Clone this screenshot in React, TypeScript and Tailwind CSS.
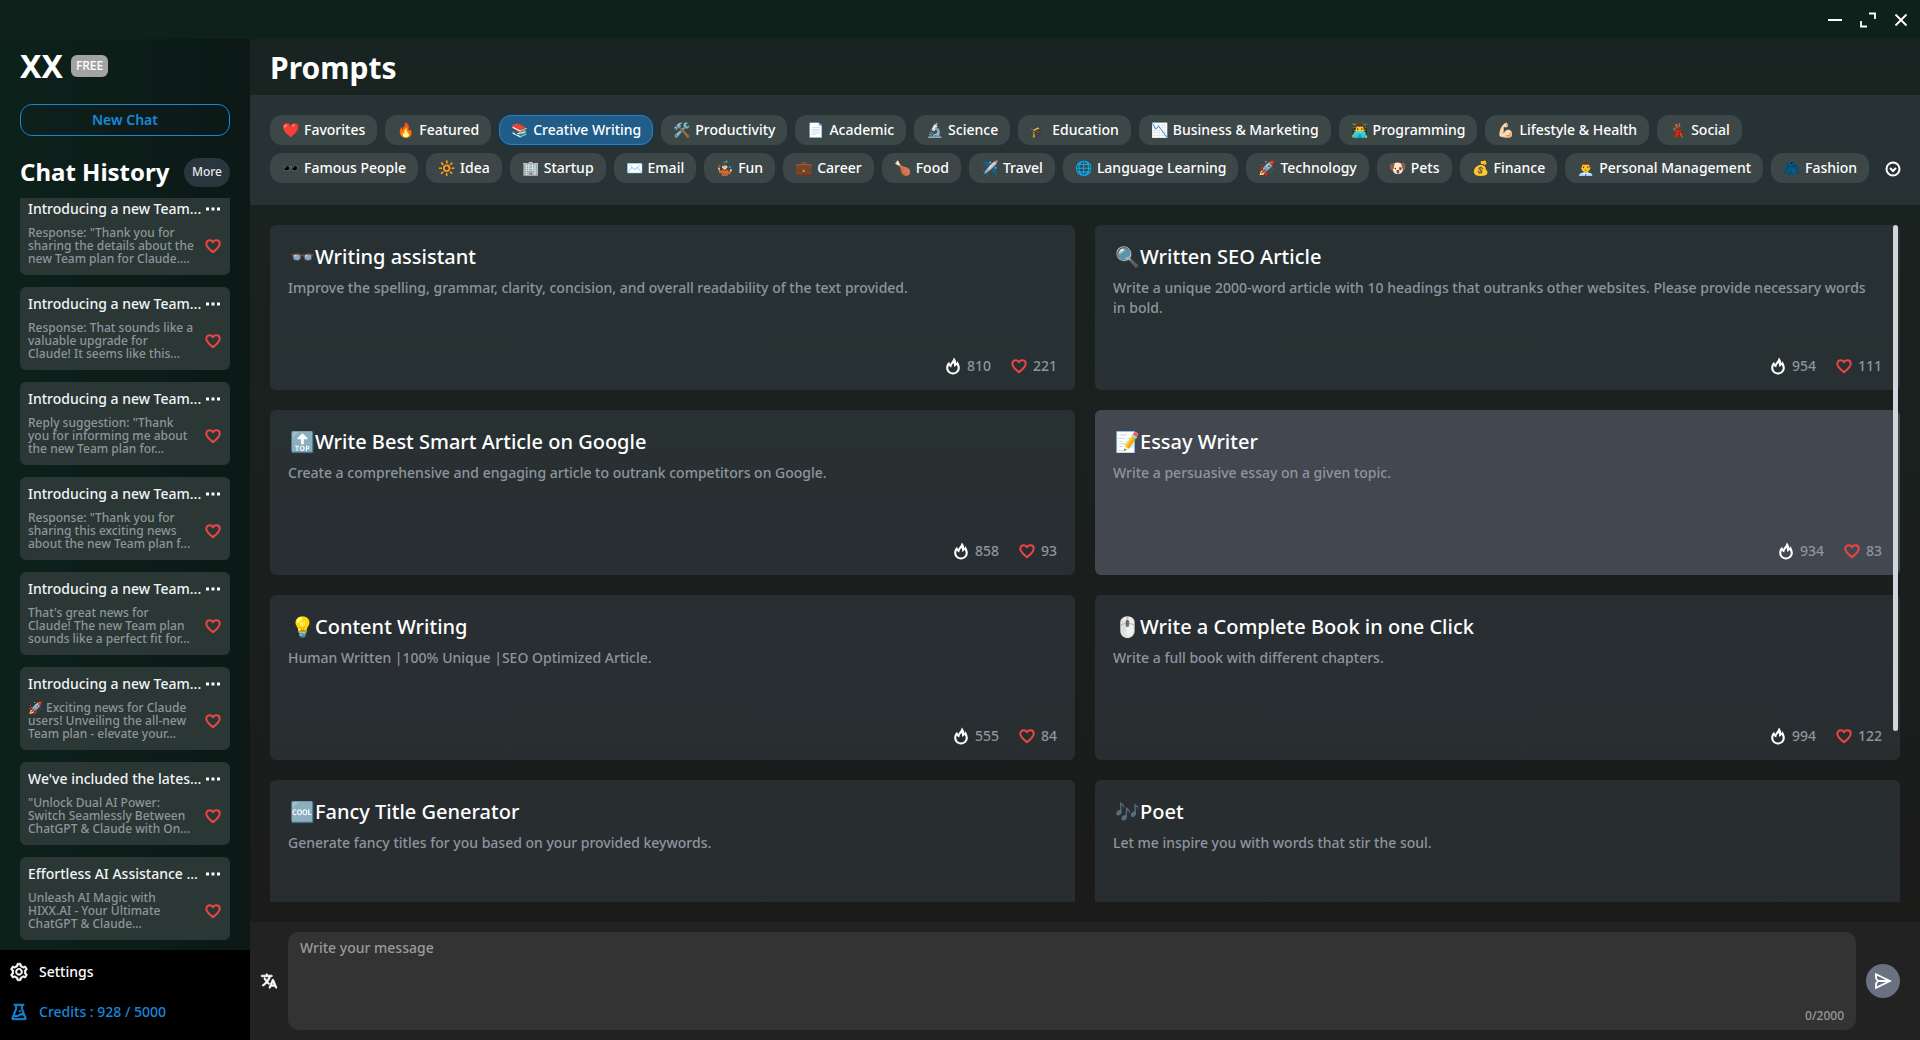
import { useState } from "react";
import { AiOutlineExperiment, AiOutlineSetting } from "react-icons/ai";
import { IoLanguage } from "react-icons/io5";

const CATEGORIES = [
  ["❤️", "Favorites"],
  ["🔥", "Featured"],
  ["📚", "Creative Writing"],
  ["🛠️", "Productivity"],
  ["📄", "Academic"],
  ["🔬", "Science"],
  ["🎓", "Education"],
  ["📉", "Business & Marketing"],
  ["👨‍💻", "Programming"],
  ["💪🏻", "Lifestyle & Health"],
  ["💃🏽", "Social"],
  ["🕶️", "Famous People"],
  ["🔆", "Idea"],
  ["🏢", "Startup"],
  ["✉️", "Email"],
  ["🤹🏻", "Fun"],
  ["💼", "Career"],
  ["🍗", "Food"],
  ["✈️", "Travel"],
  ["🌐", "Language Learning"],
  ["🚀", "Technology"],
  ["🐶", "Pets"],
  ["💰", "Finance"],
  ["👨‍💼", "Personal Management"],
  ["🧥", "Fashion"],
];

const PROMPTS = [
  { icon: "👓", title: "Writing assistant", text: "Improve the spelling, grammar, clarity, concision, and overall readability of the text provided.", uses: 810, likes: 221 },
  { icon: "🔍", title: "Written SEO Article", text: "Write a unique 2000-word article with 10 headings that outranks other websites. Please provide necessary words in bold.", uses: 954, likes: 111 },
  { icon: "🔝", title: "Write Best Smart Article on Google", text: "Create a comprehensive and engaging article to outrank competitors on Google.", uses: 858, likes: 93 },
  { icon: "📝", title: "Essay Writer", text: "Write a persuasive essay on a given topic.", uses: 934, likes: 83, active: true },
  { icon: "💡", title: "Content Writing", text: "Human Written |100% Unique |SEO Optimized Article.", uses: 555, likes: 84 },
  { icon: "🖱️", title: "Write a Complete Book in one Click", text: "Write a full book with different chapters.", uses: 994, likes: 122 },
  { icon: "🆒", title: "Fancy Title Generator", text: "Generate fancy titles for you based on your provided keywords." },
  { icon: "🎶", title: "Poet", text: "Let me inspire you with words that stir the soul." },
];

const HISTORY = [
  { title: "Introducing a new Team...", lines: ['Response: "Thank you for', "sharing the details about the", "new Team plan for Claude...."] },
  { title: "Introducing a new Team...", lines: ["Response: That sounds like a", "valuable upgrade for", "Claude! It seems like this..."] },
  { title: "Introducing a new Team...", lines: ['Reply suggestion: "Thank', "you for informing me about", "the new Team plan for..."] },
  { title: "Introducing a new Team...", lines: ['Response: "Thank you for', "sharing this exciting news", "about the new Team plan f..."] },
  { title: "Introducing a new Team...", lines: ["That's great news for", "Claude! The new Team plan", "sounds like a perfect fit for..."] },
  { title: "Introducing a new Team...", lines: ["🚀 Exciting news for Claude", "users! Unveiling the all-new", "Team plan - elevate your..."] },
  { title: "We've included the lates...", lines: ['"Unlock Dual AI Power:', "Switch Seamlessly Between", "ChatGPT & Claude with On..."] },
  { title: "Effortless AI Assistance ...", lines: ["Unleash AI Magic with", "HIXX.AI - Your Ultimate", "ChatGPT & Claude..."] },
];

function HeartIcon() {
  return (
    <svg width="16" height="16" viewBox="0 0 16 16" fill="none" stroke="#ef4444" strokeWidth="2" strokeLinejoin="round">
      <path d="M8 14.2C5 11.7 1.3 8.9 1.3 5.7 1.3 3.6 2.8 2.3 4.6 2.3c1.5 0 2.7.7 3.4 1.9.7-1.2 1.9-1.9 3.4-1.9 1.8 0 3.3 1.3 3.3 3.4 0 3.2-3.7 6-6.7 8.5z" />
    </svg>
  );
}

function FlameIcon() {
  return (
    <svg width="16" height="18" viewBox="0 0 16 18" fill="#ffffff" fillRule="evenodd">
      <path d="M8.8.4C8.6 3 6.2 4.6 5.2 7.2 4.6 6.6 4.2 5.8 4.2 4.8 2.2 6.2 1.2 8.4 1.2 10.8c0 3.9 3 6.6 6.8 6.6s6.8-2.7 6.8-6.6c0-2.7-1.3-4.7-2.5-6.8 0 .9-.2 1.7-.7 2.4C11.2 4 10.4 2 8.8.4zM8.6 6c.5 1.4.6 2.5.5 3.9 1.1-.4 2-1.2 2.5-2.2.7 1 1.1 2 1.1 3.2 0 2.7-2 4.5-4.7 4.5s-4.7-1.8-4.7-4.5c0-.9.2-1.7.5-2.4.6 1 1.4 1.6 2.5 1.9C6.3 8.8 7.2 7.3 8.6 6z" />
    </svg>
  );
}

function TitleBar() {
  return (
    <div className="flex h-[39px] shrink-0 items-center justify-end gap-[18px] bg-[#0f211b] pr-3">
      <button aria-label="Minimize">
        <svg width="14" height="14" viewBox="0 0 14 14" fill="none" stroke="currentColor" strokeWidth="2">
          <path d="M0 7h14" />
        </svg>
      </button>
      <button aria-label="Maximize">
        <svg width="16" height="16" viewBox="0 0 16 16" fill="none" stroke="currentColor" strokeWidth="1.8">
          <path d="M9 1.5h6V7M1 9v5.5h6" />
        </svg>
      </button>
      <button aria-label="Close">
        <svg width="14" height="14" viewBox="0 0 14 14" fill="none" stroke="currentColor" strokeWidth="1.8">
          <path d="M1.5 1.5l11 11M12.5 1.5l-11 11" />
        </svg>
      </button>
    </div>
  );
}

function Sidebar() {
  return (
    <aside className="flex w-[250px] shrink-0 flex-col bg-linear-to-r from-[#0d211b] to-[#0c1916]">
      <div className="flex h-[65px] shrink-0 items-center gap-2 px-5 pt-1 pb-4">
        <span className="text-[32px] font-bold leading-8">XX</span>
        <span className="rounded-md bg-[#a3a3a3] px-[5px] text-xs leading-[22px]">FREE</span>
      </div>
      <button className="mx-5 h-8 shrink-0 rounded-xl border border-[#1a86d9] text-sm font-semibold text-[#1a86d9]">
        New Chat
      </button>
      <div className="flex h-[62px] shrink-0 items-center justify-between px-5 pt-[10px]">
        <h2 className="whitespace-nowrap text-2xl font-bold">Chat History</h2>
        <button className="h-[29px] rounded-full bg-[#2a353e] px-2 text-xs text-gray-200">More</button>
      </div>
      <ul className="flex min-h-0 flex-1 flex-col justify-end gap-3 overflow-hidden px-5 pb-[10px]">
        {HISTORY.map((chat, i) => (
          <li key={i} className="h-[83px] shrink-0 rounded-md bg-[#2a3735] pt-1 pr-[9px] pl-2">
            <div className="flex items-center justify-between">
              <span className="whitespace-nowrap text-sm leading-[26px] text-gray-100">{chat.title}</span>
              <button aria-label="Chat options">
                <svg width="16" height="4" viewBox="0 0 16 4" fill="currentColor">
                  <path d="M1 .5h3v3H1zM6.5.5h3v3h-3zM12 .5h3v3h-3z" />
                </svg>
              </button>
            </div>
            <div className="flex items-center justify-between pt-1">
              <p className="whitespace-nowrap text-xs leading-[13px] text-[#8e959c]">
                {chat.lines.map((line) => (
                  <span key={line} className="block h-[13px]">{line}</span>
                ))}
              </p>
              <button aria-label="Favorite">
                <HeartIcon />
              </button>
            </div>
          </li>
        ))}
      </ul>
      <div className="flex h-[90px] shrink-0 flex-col bg-black px-[9px] pt-[2px] text-sm">
        <button className="flex h-10 items-center gap-[10px]">
          <AiOutlineSetting size={20} strokeWidth={40} />
          Settings
        </button>
        <button className="flex h-10 items-center gap-[10px] text-[#1a86d9]">
          <AiOutlineExperiment size={20} strokeWidth={40} />
          Credits : 928 / 5000
        </button>
      </div>
    </aside>
  );
}

function CategoryBar() {
  const [selected, setSelected] = useState("Creative Writing");

  return (
    <div className="flex h-[110px] shrink-0 items-start gap-2 bg-gray-600/30 py-5 pr-[18px] pl-5">
      <div className="flex flex-1 flex-wrap gap-2">
        {CATEGORIES.map(([icon, name]) => (
          <button
            key={name}
            onClick={() => setSelected(name)}
            className={`flex h-[30px] items-center gap-[5px] whitespace-nowrap rounded-xl border px-[11px] text-sm ${
              selected === name ? "border-[#1a86d9] bg-[#215d88]" : "border-transparent bg-white/10"
            }`}
          >
            <span>{icon}</span>
            {name}
          </button>
        ))}
      </div>
      <button aria-label="Show all categories" className="flex h-8 items-center self-end">
        <svg width="18" height="18" viewBox="0 0 18 18" fill="none" stroke="currentColor" strokeWidth="2">
          <circle cx="9" cy="9" r="6.5" />
          <path d="M6 8l3 3 3-3" />
        </svg>
      </button>
    </div>
  );
}

function PromptCard({ prompt }: { prompt: (typeof PROMPTS)[number] }) {
  return (
    <article
      className={`flex h-[165px] flex-col rounded-md px-[18px] pt-4 pb-[14px] ${
        prompt.active ? "bg-[#43474f]" : "bg-gray-600/30"
      }`}
    >
      <h3 className="pl-[2px] text-xl leading-8">
        {prompt.icon}
        {prompt.title}
      </h3>
      <p className="pt-[5px] pr-1 text-sm leading-5 text-[#8f959d]">{prompt.text}</p>
      {prompt.uses && (
        <div className="mt-auto flex items-center justify-end gap-5 text-sm text-[#8f959d]">
          <span className="flex items-center gap-[6px]">
            <FlameIcon />
            {prompt.uses}
          </span>
          <span className="flex items-center gap-[6px]">
            <HeartIcon />
            {prompt.likes}
          </span>
        </div>
      )}
    </article>
  );
}

function Composer() {
  const [message, setMessage] = useState("");

  return (
    <div className="flex h-[118px] shrink-0 items-center gap-[10px] bg-[#222222] pr-5 pl-[10px]">
      <button aria-label="Translate">
        <IoLanguage size={18} strokeWidth={20} />
      </button>
      <div className="relative h-[98px] flex-1">
        <textarea
          aria-label="Write your message"
          placeholder="Write your message"
          maxLength={2000}
          value={message}
          onChange={(e) => setMessage(e.target.value)}
          className="block h-full w-full resize-none rounded-[10px] bg-[#333333] px-3 py-1 text-sm leading-6 outline-none placeholder:text-[#9a9a9a]"
        />
        <span className="absolute right-3 bottom-1 text-xs leading-5 text-[#9a9a9a]">{message.length}/2000</span>
      </div>
      <button aria-label="Send" className="flex size-[34px] items-center justify-center rounded-full bg-gray-500">
        <svg width="18" height="18" viewBox="0 0 18 18" fill="none" stroke="currentColor" strokeWidth="1.8">
          <path d="M2 2.2L16 9 2 15.8V11.5L4 9 2 6.5zM4 9h12" />
        </svg>
      </button>
    </div>
  );
}

export default function App() {
  return (
    <div className="flex h-screen flex-col overflow-hidden bg-[#0f211b] font-['Noto_Sans','Open_Sans',sans-serif] font-medium text-white">
      <TitleBar />
      <div className="flex min-h-0 flex-1">
        <Sidebar />
        <main className="flex min-w-0 flex-1 flex-col bg-linear-to-b from-[#182421] to-[#1b1a19]">
          <h1 className="h-14 shrink-0 px-5 text-[30px] font-bold leading-[58px]">Prompts</h1>
          <CategoryBar />
          <div className="relative mx-5 my-5 min-h-0 flex-1 overflow-hidden">
            <div className="grid grid-cols-2 gap-5">
              {PROMPTS.map((prompt) => (
                <PromptCard key={prompt.title} prompt={prompt} />
              ))}
            </div>
            <div className="absolute top-0 right-[2px] h-[506px] w-[5px] rounded-full bg-gray-300" />
          </div>
          <Composer />
        </main>
      </div>
    </div>
  );
}
